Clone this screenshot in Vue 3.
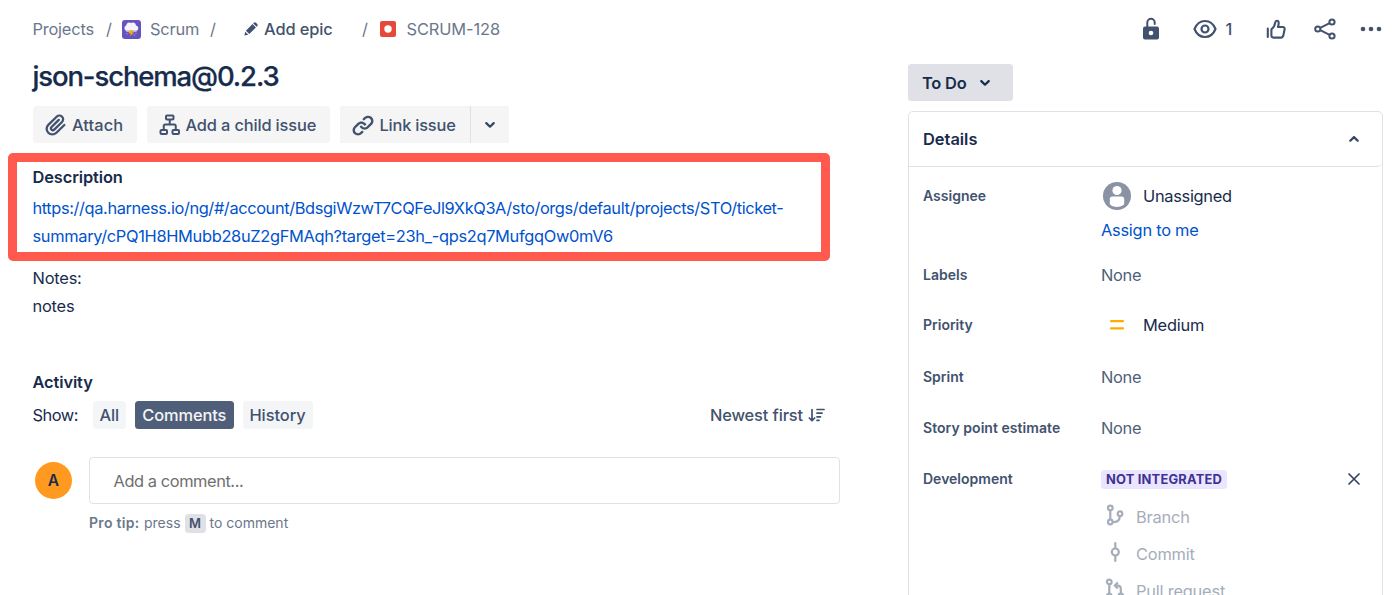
<script setup>
const tabs = [
  { label: 'All', cls: 'all' },
  { label: 'Comments', cls: 'comments' },
  { label: 'History', cls: 'history' },
]
const url = ['https://qa.harness.io/ng/#/account/BdsgiWzwT7CQFeJl9XkQ3A/sto/orgs/default/projects/STO/ticket-', 'summary/cPQ1H8HMubb28uZ2gFMAqh?target=23h_-qps2q7MufgqOw0mV6']
</script>

<template>
  <div class="page">
    <main class="main">
      <nav class="crumbs">
        <span>Projects</span>
        <span class="sep">/</span>
        <svg class="project" viewBox="0 0 19 19" width="19" height="19">
          <rect width="19" height="19" rx="3" fill="#6554c0" />
          <path d="M4.800 10.800a2.700 2.700 0 0 1-.6-5.200A3.100 3.100 0 0 1 9 3a3.200 3.200 0 0 1 5 2.400a2.800 2.800 0 0 1 .4 5.400z" fill="#f4f5f7" />
          <path d="M3.700 10.200c2 1 9.500 1 11.800-.2-.3 1.200-1 1.800-2 1.800H5.500c-1 0-1.500-.6-1.800-1.600z" fill="#c9d0ec" />
          <path d="M7.800 10.300h3.600l-1.300 2.300h2.100l-4.100 3.700.9-2.700H6.600z" fill="#ffab00" />
          <path d="M4.500 13h1v1.500h-1zM13.500 12.500h1V14h-1zM11.800 14.500h1V16h-1z" fill="#9c8fe0" />
        </svg>
        <span>Scrum</span>
        <span class="sep">/</span>
        <svg viewBox="0 0 14 14" width="14" height="14" fill="#42526e">
          <path d="M.4 13.600 1.200 9.700 4.300 12.800zM1.900 8.700 8.500 2.100l3.400 3.400-6.600 6.600zM9.200 1.400l.6-.6a1.600 1.600 0 0 1 2.200 0l1.200 1.200a1.600 1.600 0 0 1 0 2.200l-.6.600z" />
        </svg>
        <span class="epic">Add epic</span>
        <span class="sep">/</span>
        <svg viewBox="0 0 16 16" width="16" height="16">
          <rect width="16" height="16" rx="2" fill="#e5493a" />
          <circle cx="8" cy="8" r="3.700" fill="#fff" />
        </svg>
        <span class="key">SCRUM-128</span>
      </nav>

      <h1>json-schema@0.2.3</h1>

      <div class="actions">
        <button class="btn attach">
          <svg viewBox="0 0 24 24" width="28" height="28" fill="#42526e">
            <path d="M11.643 17.965c-1.530 1.495-4.016 1.496-5.542.004a3.773 3.773 0 0 1 .002-5.412l7.147-6.985a2.316 2.316 0 0 1 3.233-.003c.893.873.895 2.282.004 3.153l-6.703 6.550a.653.653 0 0 1-.914-.008.620.620 0 0 1 0-.902l6.229-6.087a.941.941 0 0 0 0-1.353.995.995 0 0 0-1.384 0l-6.230 6.087a2.502 2.502 0 0 0 0 3.607 2.643 2.643 0 0 0 3.683.009l6.703-6.550a4.170 4.170 0 0 0-.003-5.860 4.306 4.306 0 0 0-6.001.003L4.720 11.203a5.635 5.635 0 0 0-.003 8.118c2.292 2.240 6.017 2.239 8.310-.002l6.836-6.680a.936.936 0 0 0-.002-1.352.995.995 0 0 0-1.383.001z" />
          </svg>
          <span>Attach</span>
        </button>
        <button class="btn child">
          <svg viewBox="0 0 22 22" width="22" height="22" fill="none" stroke="#42526e" stroke-width="2">
            <rect x="7" y="1.500" width="7.500" height="4" rx="1" />
            <rect x="1.500" y="16" width="6.500" height="4" rx="1" />
            <rect x="13.500" y="16" width="6.500" height="4" rx="1" />
            <path d="M10.750 5.500v5M4.750 16v-4a1.500 1.500 0 0 1 1.500-1.500h9a1.500 1.500 0 0 1 1.500 1.500v4" />
          </svg>
          <span>Add a child issue</span>
        </button>
        <div class="split">
          <button class="btn link">
            <svg viewBox="0 0 24 24" width="28" height="28" fill="#42526e">
              <path d="M12.856 5.457l-.937.920a1.002 1.002 0 0 0 0 1.437 1.047 1.047 0 0 0 1.463 0l.984-.966c.967-.950 2.542-1.135 3.602-.288a2.540 2.540 0 0 1 .203 3.810l-2.903 2.852a2.646 2.646 0 0 1-3.696 0l-1.110-1.090L9 13.570l1.108 1.089c1.822 1.788 4.802 1.788 6.622 0l2.905-2.852a4.558 4.558 0 0 0-.357-6.820c-1.893-1.517-4.695-1.226-6.422.470" />
              <path d="M11.144 19.543l.937-.920a1.002 1.002 0 0 0 0-1.437 1.047 1.047 0 0 0-1.462 0l-.985.966c-.967.950-2.542 1.135-3.602.288a2.540 2.540 0 0 1-.203-3.810l2.903-2.852a2.646 2.646 0 0 1 3.696 0l1.110 1.090L15 11.430l-1.108-1.089c-1.822-1.788-4.802-1.788-6.622 0l-2.905 2.852a4.558 4.558 0 0 0 .357 6.820c1.893 1.517 4.695 1.226 6.422-.470" />
            </svg>
            <span>Link issue</span>
          </button>
          <button class="btn more">
            <svg viewBox="0 0 10 6" width="10" height="6" fill="none" stroke="#344563" stroke-width="2.200" stroke-linecap="round" stroke-linejoin="round"><path d="M1.300 1.100 5 4.700 8.700 1.100" /></svg>
          </button>
        </div>
      </div>

      <section class="description">
        <h2>Description</h2>
        <a><span v-for="part in url" :key="part">{{ part }}</span></a>
      </section>

      <div class="notes">
        <p class="n1">Notes:</p>
        <p class="n2">notes</p>
      </div>

      <h2 class="activity">Activity</h2>
      <div class="filters">
        <span class="show">Show:</span>
        <span v-for="t in tabs" :key="t.label" class="tab" :class="t.cls"><span>{{ t.label }}</span></span>
        <span class="sort">Newest first</span>
        <svg class="sorticon" viewBox="0 0 17 15" width="17" height="15" fill="none" stroke="#42526e" stroke-width="1.700" stroke-linecap="round" stroke-linejoin="round">
          <path d="M4 1.500v11M1.300 10 4 12.700 6.700 10M9 1.500h7M9 5.200h5M9 8.800h3.500M9 12.300h2" />
        </svg>
      </div>

      <div class="comment">
        <span class="avatar">A</span>
        <div class="field"><span>Add a comment...</span></div>
      </div>
      <p class="tip"><b>Pro tip:</b><span class="press">press</span><kbd>M</kbd><span class="to">to comment</span></p>
    </main>

    <aside class="side">
      <div class="tools">
        <svg class="lock" viewBox="0 0 18 24" width="18" height="24">
          <rect x="1" y="9.500" width="16" height="13" rx="2" fill="#42526e" />
          <path d="M5.300 10V5.500a3.700 3.700 0 0 1 7.400 0V7" fill="none" stroke="#42526e" stroke-width="2" stroke-linecap="round" />
          <circle cx="9" cy="16" r="2.300" fill="#fff" />
        </svg>
        <svg class="eye" viewBox="0 0 24 20" width="24" height="20" fill="none" stroke="#42526e" stroke-width="2.200">
          <path d="M1.500 10C3.500 5 7.500 2 12 2s8.500 3 10.500 8c-2 5-6 8-10.500 8S3.500 15 1.500 10z" stroke-linejoin="round" />
          <circle cx="12" cy="10" r="3.500" />
        </svg>
        <span class="count">1</span>
        <svg class="like" viewBox="0 0 20 20" width="20" height="20" fill="none" stroke="#42526e" stroke-width="2.100" stroke-linejoin="round" stroke-linecap="round">
          <path d="M1.800 9.500v8.500M5.400 10.300c2-1.300 3.300-3.500 3.800-6.700.3-2.400 3.300-2.400 3.500.2.100 1.500-.3 2.900-.8 4.200h4.800c1.400 0 2.200 1 1.900 2.300l-1.300 6.300c-.3 1.300-1 2-2.300 2H7.500c-1.300 0-2.100-.8-2.100-2z" />
        </svg>
        <svg class="share" viewBox="0 0 22 22" width="22" height="22" fill="none" stroke="#42526e" stroke-width="2">
          <circle cx="3.800" cy="11" r="2.600" /><circle cx="18" cy="4" r="2.600" /><circle cx="18" cy="18" r="2.600" />
          <path d="M6.200 9.800 15.600 5.200M6.200 12.200l9.400 4.600" />
        </svg>
        <svg class="dots" viewBox="0 0 22 6" width="22" height="6" fill="#42526e">
          <circle cx="3" cy="3" r="2.350" /><circle cx="11" cy="3" r="2.350" /><circle cx="19" cy="3" r="2.350" />
        </svg>
      </div>

      <button class="status">
        <span>To Do</span>
        <svg viewBox="0 0 10 6" width="10" height="6" fill="none" stroke="#172b4d" stroke-width="2.200" stroke-linecap="round" stroke-linejoin="round"><path d="M1.300 1.100 5 4.700 8.700 1.100" /></svg>
      </button>

      <div class="panel">
        <header>
          <span>Details</span>
          <svg viewBox="0 0 10 6" width="10" height="6" fill="none" stroke="#344563" stroke-width="2.200" stroke-linecap="round" stroke-linejoin="round"><path d="M1.300 4.700 5 1.100 8.700 4.700" /></svg>
        </header>
        <dl>
          <div class="row first">
            <dt>Assignee</dt>
            <dd>
              <svg class="person" viewBox="0 0 28 28" width="28" height="28">
                <circle cx="14" cy="14" r="14" fill="#8993a4" />
                <circle cx="14" cy="8.500" r="4.600" fill="#fff" />
                <path d="M6.800 17a2.600 2.600 0 0 1 2.600-2.600h9.200a2.600 2.600 0 0 1 2.600 2.600v5.200c-1.800 1.900-4.400 2.700-7.200 2.700s-5.400-.8-7.200-2.700z" fill="#fff" />
              </svg>
              <span class="unassigned">Unassigned</span>
            </dd>
          </div>
          <div class="row assign"><a class="tome">Assign to me</a></div>
          <div class="row labels"><dt>Labels</dt><dd class="none">None</dd></div>
          <div class="row">
            <dt>Priority</dt>
            <dd>
              <svg class="prio" viewBox="0 0 14 10" width="14" height="10" fill="#ffab00"><rect y="0" width="14" height="2.300" rx="1" /><rect y="7.200" width="14" height="2.300" rx="1" /></svg>
              <span class="medium">Medium</span>
            </dd>
          </div>
          <div class="row"><dt>Sprint</dt><dd class="none">None</dd></div>
          <div class="row"><dt class="story">Story point estimate</dt><dd class="none">None</dd></div>
          <div class="row">
            <dt>Development</dt>
            <dd>
              <span class="lozenge"><span>NOT INTEGRATED</span></span>
              <svg class="close" viewBox="0 0 12 12" width="12" height="12" fill="none" stroke="#344563" stroke-width="1.700" stroke-linecap="round"><path d="M1 1l10 10M11 1 1 11" /></svg>
            </dd>
          </div>
          <div class="dev branch">
            <svg viewBox="0 0 20 22" width="20" height="22" fill="none" stroke="#a5adba" stroke-width="2.200">
              <circle cx="5.300" cy="3.900" r="2.300" /><circle cx="5.300" cy="18" r="2.300" /><circle cx="15" cy="9.700" r="2.300" />
              <path d="M5.300 6.200v9.500M7.600 18h1.400c4 0 5.800-2 5.800-6" />
            </svg>
            <span>Branch</span>
          </div>
          <div class="dev commit">
            <svg viewBox="0 0 20 22" width="20" height="22" fill="none" stroke="#a5adba" stroke-width="2.200" stroke-linecap="round">
              <circle cx="10.300" cy="11" r="3.500" /><path d="M10.300 2.100v5M10.300 14.900v5" />
            </svg>
            <span>Commit</span>
          </div>
          <div class="dev pull">
            <svg viewBox="0 0 20 22" width="20" height="22" fill="none" stroke="#a5adba" stroke-width="2.200">
              <circle cx="4.300" cy="3.900" r="2.300" /><circle cx="4.300" cy="18" r="2.300" /><circle cx="15.800" cy="18" r="2.300" />
              <path d="M4.300 6.200v9.500M15.800 15.700v-5c0-2.200-1-3.200-3.300-3.200H10.500M12.800 4.500 9.900 7.500l2.900 3" />
            </svg>
            <span>Pull request</span>
          </div>
        </dl>
      </div>
    </aside>
  </div>
</template>

<style>
body { margin: 0; background: #fff; overflow: hidden; }
</style>

<style scoped>
.page {
  width: 1396px; height: 595px; overflow: hidden; display: flex;
  font-family: Inter, "Liberation Sans", sans-serif; font-size: 16.4px; line-height: 28px;
  color: #172b4d; white-space: nowrap; background: #fff;
}
h1, h2, p, dl, dt, dd { margin: 0; font-weight: inherit; }
button { border: 0; padding: 0; font: inherit; color: inherit; }
svg { display: block; flex: none; }
.main { width: 908px; box-sizing: border-box; padding: 15px 0 0 32.500px; }

.crumbs {
  display: grid; align-items: center; height: 28px; color: #6b778c; letter-spacing: -0.2px;
  grid-template-columns: 73.500px 16px 28px 60px 33.500px 20.500px 98px 17.500px 27px 100px;
}
.key { letter-spacing: -0.1px; }
.epic { color: #42526e; font-weight: 500; letter-spacing: -0.1px; }

h1 { margin-top: 18px; height: 30px; line-height: 30px; font-size: 27.500px; font-weight: 500; letter-spacing: -1.130px; -webkit-text-stroke: 0.250px #172b4d; }

.actions { margin-top: 15px; display: flex; gap: 9.500px; height: 37px; }
.btn { display: flex; align-items: center; box-sizing: border-box; height: 37px; background: #f5f5f6; border-radius: 3.500px; color: #42526e; font-weight: 500; letter-spacing: -0.15px; }
.attach { width: 104.500px; padding-left: 9px; gap: 2.500px; letter-spacing: 0.1px; }
.child { width: 183.500px; padding-left: 12px; gap: 5px; }
.split { display: flex; gap: 1.500px; background: #dfe1e6; border-radius: 3.500px; width: 169px; }
.link { width: 130px; padding-left: 9px; gap: 3px; border-radius: 3.500px 0 0 3.500px; letter-spacing: -0.2px; }
.more { width: 37.500px; justify-content: center; padding-left: 1px; border-radius: 0 3.500px 3.500px 0; }

.description {
  margin: 10px 0 0 -24.500px; width: 822px; height: 108px; box-sizing: border-box;
  border: 9px solid #ff5a4d; border-radius: 5px; padding: 1px 0 0 15.500px;
}
h2 { font-size: 16.400px; line-height: 28px; font-weight: 600; letter-spacing: -0.1px; }
.description h2 { margin-top: -0.500px; }
.description a { display: block; margin-top: 3px; color: #0052cc; letter-spacing: -0.390px; }
.description a span { display: block; }
.description a span + span { letter-spacing: -0.320px; }
.notes { margin-top: 3px; letter-spacing: -0.2px; }
.activity { margin-top: 48px; }
.filters { margin-top: 5px; display: flex; align-items: center; height: 28px; width: 792.500px; }
.show { width: 60px; letter-spacing: -0.500px; }
.tab { display: flex; justify-content: center; height: 28px; border-radius: 3.500px; background: #f4f5f7; color: #42526e; font-weight: 500; margin-right: 9px; letter-spacing: -0.05px; }
.all { width: 33.500px; }
.comments { width: 98.500px; background: #505f79; color: #f4f5f7; letter-spacing: -0.100px; }
.history { width: 70px; }
.sort { margin-left: auto; margin-right: 5px; color: #42526e; font-weight: 500; letter-spacing: -0.130px; }

.comment { margin-top: 28px; display: flex; align-items: center; height: 47px; }
.avatar { width: 37px; height: 37px; margin-left: 2.500px; border-radius: 50%; background: #ff991f; text-align: center; line-height: 37px; font-weight: 600; font-size: 15.500px; }
.field { margin-left: 16.500px; width: 751.500px; height: 47px; box-sizing: border-box; border: 1.500px solid #dfe1e6; border-radius: 4px; padding-left: 24px; line-height: 46px; color: #6f6f6f; letter-spacing: -0.420px; }
.tip { display: flex; align-items: center; margin: 8px 0 0 56.500px; height: 22px; font-size: 14px; color: #6b778c; }
.tip b { font-weight: 600; width: 55px; letter-spacing: 0.300px; }
.press { width: 41px; }
kbd { width: 21px; height: 19px; margin-right: 4px; border-radius: 3.500px; background: #dfe1e6; text-align: center; font: 600 13px/19px Inter, sans-serif; color: #42526e; margin-left: -0.500px; }

.side { width: 475px; }
.tools { display: flex; align-items: center; height: 28px; margin-top: 15px; color: #42526e; }
.lock { margin-left: 234px; }
.eye { margin-left: 32.500px; }
.count { margin-left: 9px; width: 8px; font-weight: 500; }
.like { margin-left: 32px; }
.share { margin-left: 28.500px; }
.dots { margin-left: 24px; }
.status { margin-top: 21px; width: 105px; height: 37px; display: flex; align-items: center; padding-left: 14px; gap: 13.500px; border-radius: 3.500px; background: #dfe1e6; color: #172b4d; font-weight: 600; letter-spacing: -0.2px; }
.panel { margin-top: 10px; height: 520px; box-sizing: border-box; border: 1px solid #dfe1e6; border-radius: 5px; }
header { display: flex; align-items: center; justify-content: space-between; height: 55px; box-sizing: border-box; border-bottom: 1px solid #dfe1e6; border-radius: 0 0 5px 0; padding: 0 23px 0 14px; font-weight: 600; }
.row { display: grid; grid-template-columns: 178px 1fr; height: 51.400px; align-items: center; padding-left: 14px; }
.row.first { height: 34px; padding-top: 12px; }
.row.assign { height: 34.500px; }
.row.labels { height: 54px; }
.row.labels + .row { margin-top: -2px; }
dt { font-size: 14px; font-weight: 600; color: #42526e; }
.story { letter-spacing: 0.050px; }
dd { display: flex; align-items: center; }
.none { color: #505f79; letter-spacing: -0.300px; }
.unassigned { letter-spacing: -0.300px; }
.medium { letter-spacing: -0.200px; }
.person { margin: 0 12px 0 2px; }
.assign a { grid-column: 2; color: #0052cc; letter-spacing: -0.250px; }
.prio { margin: 0 19px 0 9px; }
.lozenge { display: flex; justify-content: center; width: 126px; height: 19px; line-height: 19px; border-radius: 3.500px; background: #eae6ff; color: #403294; font-size: 12.900px; font-weight: 700; letter-spacing: 0.200px; }
.close { margin-left: 121px; }
.dev { display: flex; align-items: center; gap: 11px; height: 37.200px; padding-left: 196px; color: #a5adba; letter-spacing: -0.200px; }
.dev svg { margin-bottom: 4px; }
.branch { margin-top: -7px; }
</style>
